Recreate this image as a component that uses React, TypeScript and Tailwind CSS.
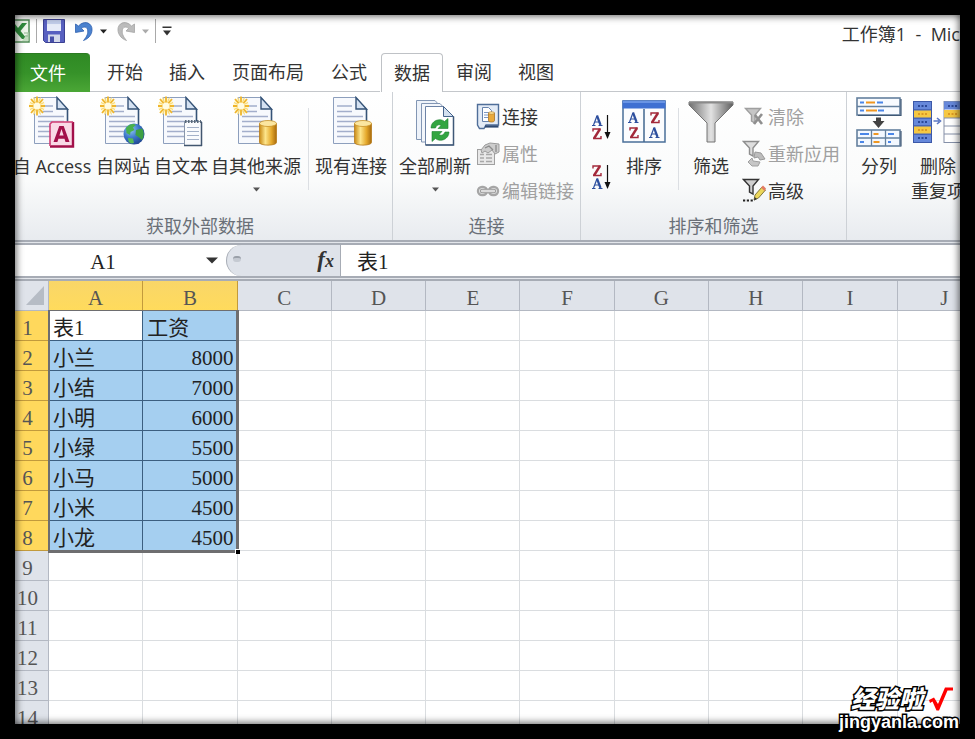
import type { ReactNode } from "react";

const UI = "font-['Open_Sans','Noto_Sans_CJK_SC',sans-serif]";
const SHEET = "font-['Liberation_Serif','Noto_Sans_CJK_SC',serif]";

/* ---------- drawings ---------- */

function Page() {
  return (
    <>
      <path d="M5.5 1.5H28L38.5 13V47.5H5.5Z" fill="#f7f9fd" stroke="#8d9fbd" />
      <path d="M28 1.5V13H38.5Z" fill="#d5e2f2" stroke="#355377" strokeWidth="1.4" />
      <path d="M38.5 13V47.5" stroke="#355377" strokeWidth="1.6" />
      <path d="M9 10h15M9 15.500h15M9 20.500h26M9 25.500h26M9 30.500h26M9 35.500h26M9 40.500h26" stroke="#a3aecb" strokeWidth="1.300" />
    </>
  );
}

function Spark() {
  return (
    <>
      <circle cx="8" cy="10" r="8" fill="#fff6c4" opacity="0.8" />
      <path d="M8 0.500V19.500M0 10H16M2 3L14 17M14 3L2 17" stroke="#f0b52c" strokeWidth="1.800" />
      <path d="M4.500 1.500L11.500 18.500M11.500 1.500L4.500 18.500M1 6.500L15 13.500M15 6.500L1 13.500" stroke="#f8d56a" strokeWidth="1" />
      <circle cx="8" cy="10" r="3.600" fill="#fffbe0" />
    </>
  );
}

function Cylinder() {
  return (
    <>
      <defs>
        <linearGradient id="gold" x1="0" x2="1" y1="0" y2="0">
          <stop offset="0" stopColor="#c98a16" />
          <stop offset="0.35" stopColor="#fde58b" />
          <stop offset="0.7" stopColor="#e5a92c" />
          <stop offset="1" stopColor="#a86a0c" />
        </linearGradient>
      </defs>
      <path d="M26.500 27.500V46.500C26.500 50 43.500 50 43.500 46.500V27.500Z" fill="url(#gold)" stroke="#b67b1c" strokeWidth="0.800" />
      <ellipse cx="35" cy="27.500" rx="8.500" ry="3" fill="#fbe6a0" stroke="#c99328" strokeWidth="0.800" />
    </>
  );
}

function DocIcon({ spark = true, children }: { spark?: boolean; children: ReactNode }) {
  return (
    <svg width="46" height="52" viewBox="0 0 46 52" fill="none" aria-hidden="true">
      <Page />
      {spark && <Spark />}
      {children}
    </svg>
  );
}

function AccessBadge() {
  return (
    <>
      <path d="M23.500 25.500H44.500V51H21.500V27.500Z" fill="#f9d9e6" />
      <path d="M44 26V50.500H21" stroke="#a3104a" strokeWidth="2.400" />
      <path d="M21 50V28L23 26H44" stroke="#cf3d74" strokeWidth="1.600" />
      <path d="M24.500 46L30.300 30H34.700L40.500 46H36.500L35.500 42.700H29.400L28.400 46ZM30.400 39.500H34.600L32.500 33Z" fill="#a3104a" />
    </>
  );
}

function Globe() {
  return (
    <>
      <defs>
        <radialGradient id="sea" cx="0.35" cy="0.3" r="0.8">
          <stop offset="0" stopColor="#8fc7f5" />
          <stop offset="0.5" stopColor="#3a74c8" />
          <stop offset="1" stopColor="#1b3f88" />
        </radialGradient>
      </defs>
      <circle cx="34" cy="38" r="10.500" fill="url(#sea)" />
      <path d="M26 32C29 27.500 34 27 36 29L33 31.500L34.500 34L30.500 36L30 39L26.500 37Z" fill="#49b04d" />
      <path d="M36 34L42 32.500C44.500 36 44 41 42 44L38.500 41L35.500 39Z" fill="#3da043" />
      <path d="M28 42L33 42.500L34 47L31 47.500C29 46.500 28 45 28 42Z" fill="#57bb56" />
    </>
  );
}

function Notepad() {
  return (
    <>
      <rect x="26.500" y="25.500" width="17" height="24" fill="#fafbfd" stroke="#8996aa" />
      <path d="M43.500 26V50M26 49.500H44" stroke="#42566f" strokeWidth="1.500" />
      <path d="M27 25.500H43" stroke="#596879" strokeWidth="3" strokeDasharray="1.5 1.5" />
      <path d="M29 31.500H41M29 35.500H41M29 39.500H41M29 43.500H41" stroke="#a4b1c8" />
    </>
  );
}

function RefreshIcon() {
  return (
    <svg width="40" height="47" viewBox="0 0 40 47" fill="none" aria-hidden="true">
      <path d="M1.500 1.500H20L26 8V40.500H1.500Z" fill="#eef3fa" stroke="#8296b4" />
      <path d="M6.500 4.500H25L31 11V43H6.500Z" fill="#f3f6fb" stroke="#8296b4" />
      <path d="M10.500 7.500H28.500L38.500 17.500V46H10.500Z" fill="#fff" stroke="#6d83a6" />
      <path d="M28.500 7.500V17.500H38.500Z" fill="#d3e0f0" stroke="#46648c" />
      <path d="M38.500 17.500V46H10.500" stroke="#3f5877" strokeWidth="1.500" />
      <path d="M16 29C16 21.500 25 18.500 29.500 22.500L33 19.500V29.500H23L26 26.500C24 25 21.500 26 20.500 29Z" fill="#33a541" stroke="#1c8130" strokeWidth="0.600" />
      <path d="M34 33C34 40.500 25 43.500 20.500 39.500L17 42.500V32.500H27L24 35.500C26 37 29 36 30 33Z" fill="#33a541" stroke="#1c8130" strokeWidth="0.600" />
    </svg>
  );
}

function ConnectionIcon() {
  return (
    <svg width="24" height="27" viewBox="0 0 24 27" fill="none" aria-hidden="true">
      <path d="M1.500 1.500H22.500V22H10L8 25.500H3.500L1.500 22Z" fill="#e3ebf6" stroke="#4f6e99" strokeWidth="1.400" />
      <path d="M9 23.500H22.500" stroke="#2f4a73" strokeWidth="2.200" />
      <path d="M6.500 4.500H12.500L15.500 7.500V18.500H6.500Z" fill="#fff" stroke="#6783ad" />
      <path d="M8 9.500H13M8 12H13M8 14.500H12" stroke="#7d97c2" />
      <path d="M12.500 10V17.500C12.500 19.500 18.500 19.500 18.500 17.500V10Z" fill="#e9a93b" stroke="#a87224" strokeWidth="0.800" />
      <ellipse cx="15.500" cy="10" rx="3" ry="1.300" fill="#fbdf95" stroke="#b5802c" strokeWidth="0.600" />
    </svg>
  );
}

function PropertiesIcon() {
  return (
    <svg width="24" height="24" viewBox="0 0 24 24" fill="none" aria-hidden="true">
      <rect x="1.500" y="7.500" width="17" height="15" fill="#e8e8e8" stroke="#a0a0a0" />
      <path d="M4 12.500h4M4 16h4M4 19.500h4M10 12.500h6M10 16h6M10 19.500h6" stroke="#a8a8a8" strokeWidth="1.600" />
      <path d="M5 8L9 3L14 1L23 2V10L19 12L16 8L12 11L9 9L6 11Z" fill="#cdcdcd" stroke="#9b9b9b" />
      <path d="M9 6L13 4L17 8M20 3V10" stroke="#8c8c8c" strokeWidth="1.300" />
    </svg>
  );
}

function LinkIcon() {
  return (
    <svg width="24" height="16" viewBox="0 0 24 16" fill="none" aria-hidden="true">
      <rect x="2" y="4" width="9" height="8" rx="4" stroke="#a6a6a6" strokeWidth="2.400" />
      <rect x="13" y="4" width="9" height="8" rx="4" stroke="#a6a6a6" strokeWidth="2.400" />
      <path d="M6 8H18" stroke="#999" strokeWidth="4.400" strokeLinecap="round" />
      <path d="M6 8H18" stroke="#dcdcdc" strokeWidth="2.400" strokeLinecap="round" />
    </svg>
  );
}

function GlyphA({ x, y }: { x: number; y: number }) {
  return (
    <g transform={`translate(${x} ${y})`} stroke="#2d4f9e">
      <path d="M1.500 10L5 0.800" strokeWidth="1.200" />
      <path d="M5 0.500L8.500 10" strokeWidth="2.200" />
      <path d="M3 7H7.500M0 10.500H3.500M6.500 10.500H10.500" strokeWidth="1.200" />
    </g>
  );
}

function GlyphZ({ x, y }: { x: number; y: number }) {
  return (
    <g transform={`translate(${x} ${y})`} stroke="#a3283a" fill="none">
      <path d="M1 3.500V1H8.800M1 10.500H9V8" strokeWidth="1.400" />
      <path d="M8 1L2 10.500" strokeWidth="2.400" />
    </g>
  );
}

function SortArrowIcon({ reverse = false }: { reverse?: boolean }) {
  return (
    <svg width="20" height="26" viewBox="0 0 20 26" fill="none" aria-hidden="true">
      {reverse ? (
        <>
          <GlyphZ x={0} y={1} />
          <GlyphA x={0} y={14} />
        </>
      ) : (
        <>
          <GlyphA x={0} y={1} />
          <GlyphZ x={0} y={14} />
        </>
      )}
      <path d="M15.500 1V20" stroke="#111" strokeWidth="1.200" />
      <path d="M12.500 18H18.500L15.500 25Z" fill="#111" />
    </svg>
  );
}

function SortIcon() {
  return (
    <svg width="44" height="44" viewBox="0 0 44 44" fill="none" aria-hidden="true">
      <rect x="1" y="1" width="42" height="41" fill="#fbfcfe" stroke="#4a6f99" strokeWidth="1.500" />
      <rect x="0.500" y="0.500" width="43" height="8" fill="#3f70d2" />
      <path d="M1 2H43" stroke="#79a1ea" strokeWidth="1.500" />
      <path d="M22 9V42" stroke="#42678f" strokeWidth="1.500" />
      <GlyphA x={6} y={12} />
      <GlyphZ x={7} y={27} />
      <GlyphZ x={28} y={12} />
      <GlyphA x={27} y={27} />
    </svg>
  );
}

function FilterIcon() {
  return (
    <svg width="46" height="42" viewBox="0 0 46 42" fill="none" aria-hidden="true">
      <defs>
        <linearGradient id="steel" x1="0" x2="1" y1="0" y2="0">
          <stop offset="0" stopColor="#6f6f6f" />
          <stop offset="0.5" stopColor="#e2e2e2" />
          <stop offset="1" stopColor="#5e5e5e" />
        </linearGradient>
      </defs>
      <path d="M1 1H45V4L27 22V41H19V22L1 4Z" fill="url(#steel)" stroke="#747474" />
      <path d="M1 1.500H45" stroke="#8a8a8a" strokeWidth="2" />
    </svg>
  );
}

function FunnelSmall({ color, fill }: { color: string; fill: string }) {
  return <path d="M1.500 1.500H16.500L11 8V16L7.500 14V8Z" fill={fill} stroke={color} strokeWidth="1.400" />;
}

function ClearIcon() {
  return (
    <svg width="24" height="22" viewBox="0 0 24 22" fill="none" aria-hidden="true">
      <g transform="translate(2 1)">
        <FunnelSmall color="#9f9f9f" fill="#c6c6c6" />
      </g>
      <path d="M13 9L20 18M20 8L12 18" stroke="#8f8f8f" strokeWidth="2.600" />
    </svg>
  );
}

function ReapplyIcon() {
  return (
    <svg width="24" height="28" viewBox="0 0 24 28" fill="none" aria-hidden="true">
      <FunnelSmall color="#8e8e8e" fill="#dedede" />
      <path d="M13 12L19 13L23 19L18 20L16 17L12 18Z" fill="#bdbdbd" stroke="#999" />
      <path d="M6 22L10 18L11 21L18 22L16 26H10L8 24Z" fill="#c6c6c6" stroke="#a0a0a0" />
    </svg>
  );
}

function AdvancedIcon() {
  return (
    <svg width="24" height="25" viewBox="0 0 24 25" fill="none" aria-hidden="true">
      <FunnelSmall color="#333" fill="#cfcfcf" />
      <path d="M1 22.500H12" stroke="#222" strokeWidth="2.200" strokeDasharray="2.2 1.6" />
      <path d="M12 22L13 17L20 9L23.500 12L16.500 20Z" fill="#ecd75a" stroke="#74692c" strokeWidth="0.900" />
      <path d="M19 9.500L21 7.500L24 10.500L22.500 13Z" fill="#e27a62" />
      <path d="M12 22.500L12.700 19L15 21Z" fill="#333" />
    </svg>
  );
}

function SplitIcon() {
  return (
    <svg width="46" height="50" viewBox="0 0 46 50" fill="none" aria-hidden="true">
      <rect x="1" y="1" width="43" height="17" fill="#f8fbff" stroke="#64809e" strokeWidth="1.600" />
      <path d="M1 9.500H44" stroke="#64809e" strokeWidth="1.400" />
      <path d="M4 5.500h4M21 5.500h6M4 13.500h4M22 13.500h6" stroke="#4a86e8" strokeWidth="2" />
      <path d="M10 5.500h9M10 13.500h11" stroke="#ef9722" strokeWidth="2.200" />
      <path d="M20 20.500H25V24H28.500L22.500 31L16.500 24H20Z" fill="#424242" />
      <rect x="1" y="33" width="43" height="16" fill="#f3f8ff" stroke="#64809e" strokeWidth="1.600" />
      <path d="M1 41H44M15.500 33V49M29.500 33V49" stroke="#64809e" strokeWidth="1.300" />
      <path d="M4 37h9M32 37h6M4 45h4M32 45h3" stroke="#4a86e8" strokeWidth="2" />
      <path d="M17.500 37h5M17.500 45h6" stroke="#ef9722" strokeWidth="2" />
      <path d="M45 2V18.500H2M45 34V49.500" stroke="#3f5875" strokeWidth="1.200" />
    </svg>
  );
}

function DedupeIcon() {
  return (
    <svg width="50" height="42" viewBox="0 0 50 42" fill="none" aria-hidden="true">
      <rect x="0.500" y="0.500" width="18" height="41" fill="#6688da" stroke="#3c58a8" />
      <path d="M1 9H18M1 17H18M1 25H18M1 33H18" stroke="#2c4795" />
      <rect x="1" y="9.500" width="17" height="7" fill="#f6c842" />
      <rect x="1" y="25.500" width="17" height="7" fill="#f6c842" />
      <path d="M5 5h9M5 21h9M5 37h9" stroke="#2b4897" strokeWidth="2" strokeDasharray="2 1.500" />
      <path d="M5 13h9M5 29h9" stroke="#dd9a24" strokeWidth="2" strokeDasharray="2 1.500" />
      <path d="M20.500 20H26M24 17L27.500 20L24 23" stroke="#5b77c2" strokeWidth="1.600" />
      <rect x="31" y="0.500" width="18" height="41" fill="#fff" stroke="#8590a8" />
      <rect x="31" y="0.500" width="18" height="8" fill="#6688da" />
      <rect x="31" y="9" width="18" height="8" fill="#f6c842" />
      <path d="M31 17H49M31 25H49M31 33H49" stroke="#8590a8" />
      <path d="M35 5h10" stroke="#2b4897" strokeWidth="2" strokeDasharray="2 1.500" />
      <path d="M35 13h10" stroke="#dd9a24" strokeWidth="2" strokeDasharray="2 1.500" />
    </svg>
  );
}

function ExcelIcon() {
  return (
    <svg width="15" height="25" viewBox="0 0 15 25" fill="none" aria-hidden="true">
      <rect x="-8" y="1" width="22" height="22" fill="#edf5ea" stroke="#4f8a55" strokeWidth="1.500" />
      <path d="M0 5L3 9L7 4H12L5.500 12L12 20H7L0 12" fill="#2f8a3c" />
      <path d="M7 22L13.500 13V22Z" fill="#c3dcc0" />
      <path d="M9 14H13M10 17H13" stroke="#8cb58d" />
    </svg>
  );
}

function SaveIcon() {
  return (
    <svg width="22" height="24" viewBox="0 0 22 24" fill="none" aria-hidden="true">
      <path d="M0.500 0.500H21.500V23.500H2.500L0.500 21.500Z" fill="#5860c0" stroke="#3b4092" />
      <path d="M4 1H18V12H4Z" fill="#e6ebf8" />
      <path d="M4 1H18V5H4Z" fill="#c2cdea" />
      <rect x="5" y="15.500" width="12" height="7.500" fill="#d4d9ea" />
      <rect x="7" y="17.500" width="4" height="5.500" fill="#4850a8" />
    </svg>
  );
}

function CurlArrow({ flip = false }: { flip?: boolean }) {
  return (
    <svg width="18" height="20" viewBox="0 0 18 20" fill="none" aria-hidden="true">
      <g transform={flip ? "translate(18 0) scale(-1 1)" : undefined}>
        <path
          d="M0.500 3L3.500 5C8 0 15 0.500 16.800 6.500C18 12 14.500 17.500 8.500 19.500C12 15.500 13.500 12 12.500 8.500C11.500 5.500 8.500 5.500 6.500 7.500L9 10L0.500 11.500Z"
          fill={flip ? "#bcbcbc" : "#4b82cf"}
          stroke={flip ? "#a5a5a5" : "#2f5fae"}
          strokeWidth="0.800"
        />
      </g>
    </svg>
  );
}

function Caret({ className = "text-[#555]" }: { className?: string }) {
  return (
    <svg className={className} width="7" height="5" viewBox="0 0 7 5" fill="currentColor" aria-hidden="true">
      <path d="M0 0.500H7L3.500 4.500Z" />
    </svg>
  );
}

/* ---------- ribbon parts ---------- */

function BigButton({ icon, label, width, caret = false }: { icon: ReactNode; label: ReactNode; width: string; caret?: boolean }) {
  return (
    <button type="button" className={`flex shrink-0 flex-col items-center ${width}`}>
      <span className="flex h-[56px] items-center justify-center pt-1">{icon}</span>
      <span className="pt-1.5 text-lg leading-[25px] whitespace-nowrap">{label}</span>
      {caret && (
        <span className="pt-2">
          <Caret />
        </span>
      )}
    </button>
  );
}

function SmallButton({ icon, label, disabled = false }: { icon: ReactNode; label: string; disabled?: boolean }) {
  return (
    <button
      type="button"
      disabled={disabled}
      className="flex h-[37px] items-center gap-0.5 text-lg whitespace-nowrap text-[#333] disabled:text-[#a0a0a0]"
    >
      <span className="flex w-6 items-center justify-center">{icon}</span>
      {label}
    </button>
  );
}

function Group({ title, width, children }: { title: string; width: string; children: ReactNode }) {
  return (
    <section className={`flex shrink-0 flex-col border-r border-[#cdd1d6] ${width}`}>
      <div className="flex flex-1 items-start">{children}</div>
      <h2 className="h-7 text-center text-lg leading-7 text-[#6a7078]">{title}</h2>
    </section>
  );
}

function Divider() {
  return <div className="mt-4 h-[82px] w-px shrink-0 bg-[#dcdfe3]" />;
}

const columns = ["A", "B", "C", "D", "E", "F", "G", "H", "I", "J"];
const records = [
  ["表1", "工资"],
  ["小兰", "8000"],
  ["小结", "7000"],
  ["小明", "6000"],
  ["小绿", "5500"],
  ["小马", "5000"],
  ["小米", "4500"],
  ["小龙", "4500"],
];
const rowNumbers = Array.from({ length: 14 }, (_, i) => i + 1);

function cellClass(row: number, col: number) {
  if (row >= records.length || col > 1) return "border-[#dadde0]";
  const fill = row === 0 && col === 0 ? "bg-white" : "bg-[#a5cff0]";
  const align = row > 0 && col === 1 ? "pr-[3px] text-right" : "pl-1 text-left";
  return `border-[#3c5f80] ${fill} ${align}`;
}

function Sheet() {
  return (
    <div className={`relative min-h-0 flex-1 overflow-hidden bg-white ${SHEET}`}>
      <table className="w-[977px] table-fixed border-separate border-spacing-0 text-[21px] leading-6 text-[#222]">
        <colgroup>
          <col className="w-[34px]" />
          {columns.map((c) => (
            <col key={c} />
          ))}
        </colgroup>
        <thead>
          <tr className="h-[30px]">
            <th className="border-r border-b border-[#b3b8c2] bg-[#dfe3ea] p-0">
              <svg className="mr-1 ml-auto" width="18" height="19" viewBox="0 0 18 19" aria-hidden="true">
                <path d="M18 0V19H0Z" fill="#b6bcc5" />
              </svg>
            </th>
            {columns.map((c, i) => (
              <th
                key={c}
                scope="col"
                className={`border-r border-b p-0 pt-[5px] font-normal text-[#555] ${
                  i < 2 ? "border-[#c29a3c] bg-linear-to-b from-[#f9d668] to-[#ffdb5c]" : "border-[#b3b8c2] bg-[#dfe3ea]"
                }`}
              >
                {c}
              </th>
            ))}
          </tr>
        </thead>
        <tbody>
          {rowNumbers.map((n, r) => (
            <tr key={n} className="h-[30px]">
              <th
                scope="row"
                className={`border-r border-b p-0 pt-[5px] pr-2 font-normal text-[#555] ${
                  r < 8 ? "border-[#c29a3c] bg-[#ffd85c]" : "border-[#b3b8c2] bg-[#dfe3ea]"
                }`}
              >
                {n}
              </th>
              {columns.map((c, i) => (
                <td key={c} className={`border-r border-b p-0 pt-[5px] ${cellClass(r, i)}`}>
                  {records[r]?.[i]}
                </td>
              ))}
            </tr>
          ))}
        </tbody>
      </table>
      <div className="pointer-events-none absolute top-[29px] left-[33px] h-[243px] w-[191px] border-t border-r-3 border-b-3 border-l-2 border-[#6e6e70]">
        <div className="absolute -right-[4px] -bottom-[4px] size-[5px] border-t border-l border-white bg-black" />
      </div>
    </div>
  );
}

const tabs = [
  { name: "开始", style: "px-[13px]" },
  { name: "插入", style: "px-[13px]" },
  { name: "页面布局", style: "px-[14px]" },
  { name: "公式", style: "px-[13px]" },
  { name: "数据", style: "active" },
  { name: "审阅", style: "px-[13px]" },
  { name: "视图", style: "px-[13px]" },
];

export default function App() {
  return (
    <div className={`relative h-screen bg-black p-[15px] text-[#333] ${UI}`}>
      <div className="relative flex h-full flex-col overflow-hidden bg-white">
        <header className="flex h-[38px] shrink-0 items-center pb-1.5">
          <ExcelIcon />
          <div className="ml-1.5 h-6 w-px bg-[#a9a9a9]" />
          <button type="button" aria-label="保存" className="ml-1.5">
            <SaveIcon />
          </button>
          <button type="button" aria-label="撤消" className="ml-2.5 flex items-center gap-[7px]">
            <CurlArrow />
            <Caret className="text-[#222]" />
          </button>
          <button type="button" aria-label="恢复" disabled className="ml-2.5 flex items-center gap-[7px]">
            <CurlArrow flip />
            <Caret className="text-[#aaa]" />
          </button>
          <div className="ml-1.5 h-6 w-px bg-[#a9a9a9]" />
          <button type="button" aria-label="自定义快速访问工具栏" className="ml-1.5">
            <svg width="10" height="10" viewBox="0 0 10 10" aria-hidden="true">
              <path d="M0.500 0.500H9.500V2H0.500ZM1 4.500H9L5 9.500Z" fill="#333" />
            </svg>
          </button>
          <h1 className="mt-1.5 ml-auto text-lg whitespace-pre">工作簿1  -  Mic</h1>
        </header>

        <nav className="flex h-[39px] shrink-0 items-stretch text-lg">
          <button
            type="button"
            className="w-[75px] rounded-tr-sm border-t border-[#2c7a22] bg-linear-to-b from-[#2f8a24] via-[#369229] to-[#4ba736] pl-[15px] text-left text-white"
          >
            文件
          </button>
          <div className="w-1 border-b border-[#c4c7cb]" />
          {tabs.map((t) =>
            t.style === "active" ? (
              <button
                key={t.name}
                type="button"
                aria-current="page"
                className="ml-px w-[62px] rounded-t-sm border border-b-0 border-[#bfc2c6] bg-white"
              >
                {t.name}
              </button>
            ) : (
              <button key={t.name} type="button" className={`border-b border-[#c4c7cb] ${t.style}`}>
                {t.name}
              </button>
            ),
          )}
          <div className="flex-1 border-b border-[#c4c7cb]" />
        </nav>

        <div className="flex h-[148px] shrink-0 bg-linear-to-b from-white via-[#fafbfb] via-60% to-[#e8ebef]">
          <Group title="获取外部数据" width="-ml-[7px] w-[385px]">
            <div className="flex pl-[3px]">
              <BigButton width="w-[82px]" icon={<DocIcon><AccessBadge /></DocIcon>} label="自 Access" />
              <BigButton width="w-[60px]" icon={<DocIcon><Globe /></DocIcon>} label="自网站" />
              <BigButton width="w-[56px]" icon={<DocIcon><Notepad /></DocIcon>} label="自文本" />
              <BigButton width="w-[94px]" icon={<DocIcon><Cylinder /></DocIcon>} label="自其他来源" caret />
            </div>
            <div className="w-[5px]" />
            <Divider />
            <div className="w-1.5" />
            <BigButton width="w-[72px]" icon={<DocIcon spark={false}><Cylinder /></DocIcon>} label="现有连接" />
          </Group>
          <Group title="连接" width="w-[188px]">
            <div className="w-1.5" />
            <BigButton width="w-[72px]" icon={<RefreshIcon />} label="全部刷新" caret />
            <div className="ml-[5px] flex flex-col pt-1.5">
              <SmallButton icon={<ConnectionIcon />} label="连接" />
              <SmallButton icon={<PropertiesIcon />} label="属性" disabled />
              <SmallButton icon={<LinkIcon />} label="编辑链接" disabled />
            </div>
          </Group>
          <Group title="排序和筛选" width="w-[266px]">
            <div className="ml-[11px] flex flex-col gap-6 pt-[22px]">
              <button type="button" aria-label="升序">
                <SortArrowIcon />
              </button>
              <button type="button" aria-label="降序">
                <SortArrowIcon reverse />
              </button>
            </div>
            <BigButton width="ml-1.5 w-[52px]" icon={<SortIcon />} label="排序" />
            <div className="w-2" />
            <Divider />
            <BigButton width="ml-1.5 w-[52px]" icon={<FilterIcon />} label="筛选" />
            <div className="ml-[5px] flex flex-col pt-1.5">
              <SmallButton icon={<ClearIcon />} label="清除" disabled />
              <SmallButton icon={<ReapplyIcon />} label="重新应用" disabled />
              <SmallButton icon={<AdvancedIcon />} label="高级" />
            </div>
          </Group>
          <div className="flex items-start">
            <BigButton width="w-[64px]" icon={<SplitIcon />} label="分列" />
            <BigButton width="w-[54px]" icon={<DedupeIcon />} label={<>删除<br />重复项</>} />
          </div>
        </div>

        <div className="flex h-[41px] shrink-0 border-y-[5px] border-double border-[#a7acb5] bg-[#e3e6eb]">
          <div className="flex flex-1 bg-white">
            <div className="flex w-[211px] shrink-0 items-center">
              <input
                aria-label="名称框"
                defaultValue="A1"
                className={`w-[176px] bg-transparent pt-1 text-center text-[21px] text-[#222] outline-none ${SHEET}`}
              />
              <svg className="ml-[15px]" width="12" height="7" viewBox="0 0 12 7" aria-hidden="true">
                <path d="M0 0.500H12L6 6.500Z" fill="#333" />
              </svg>
            </div>
            <div className="flex w-[115px] shrink-0 items-center rounded-l-full border border-y-0 border-[#a7acb5] bg-[#dfe3ea]">
              <div className="mb-1 ml-1.5 h-1.5 w-2 rounded-sm border-t-2 border-[#9aa0a9] bg-[#c5cad2]" />
              <button type="button" className="mr-1.5 ml-auto font-['Liberation_Serif',serif] text-[23px] leading-6 font-bold text-[#333] italic">
                f<span className="text-lg">x</span>
              </button>
            </div>
            <input
              aria-label="编辑栏"
              defaultValue="表1"
              className={`min-w-0 flex-1 bg-transparent pt-1 pl-4 text-[21px] text-[#222] outline-none ${SHEET}`}
            />
          </div>
        </div>

        <Sheet />
        <div className="pointer-events-none absolute inset-0 shadow-[inset_0_0_8px_rgba(0,0,0,0.8)]" />
      </div>

      <div className="absolute right-4 bottom-1.5 flex flex-col items-end text-white [paint-order:stroke_fill] [-webkit-text-stroke:3px_black]">
        <div className="mr-1.5 flex items-center gap-1.5 text-2xl leading-5 font-black italic">
          经验啦
          <svg width="24" height="24" viewBox="0 0 24 24" fill="none" aria-hidden="true">
            <path d="M0 13L5 10.500L9 17L16 0.500H24V3.500H18.500L10 23.500H7.500L3.500 14.500L1 16Z" fill="#f00" />
          </svg>
        </div>
        <div className="font-['Liberation_Sans',sans-serif] text-lg leading-[22px] font-bold">jingyanla.com</div>
      </div>
    </div>
  );
}
